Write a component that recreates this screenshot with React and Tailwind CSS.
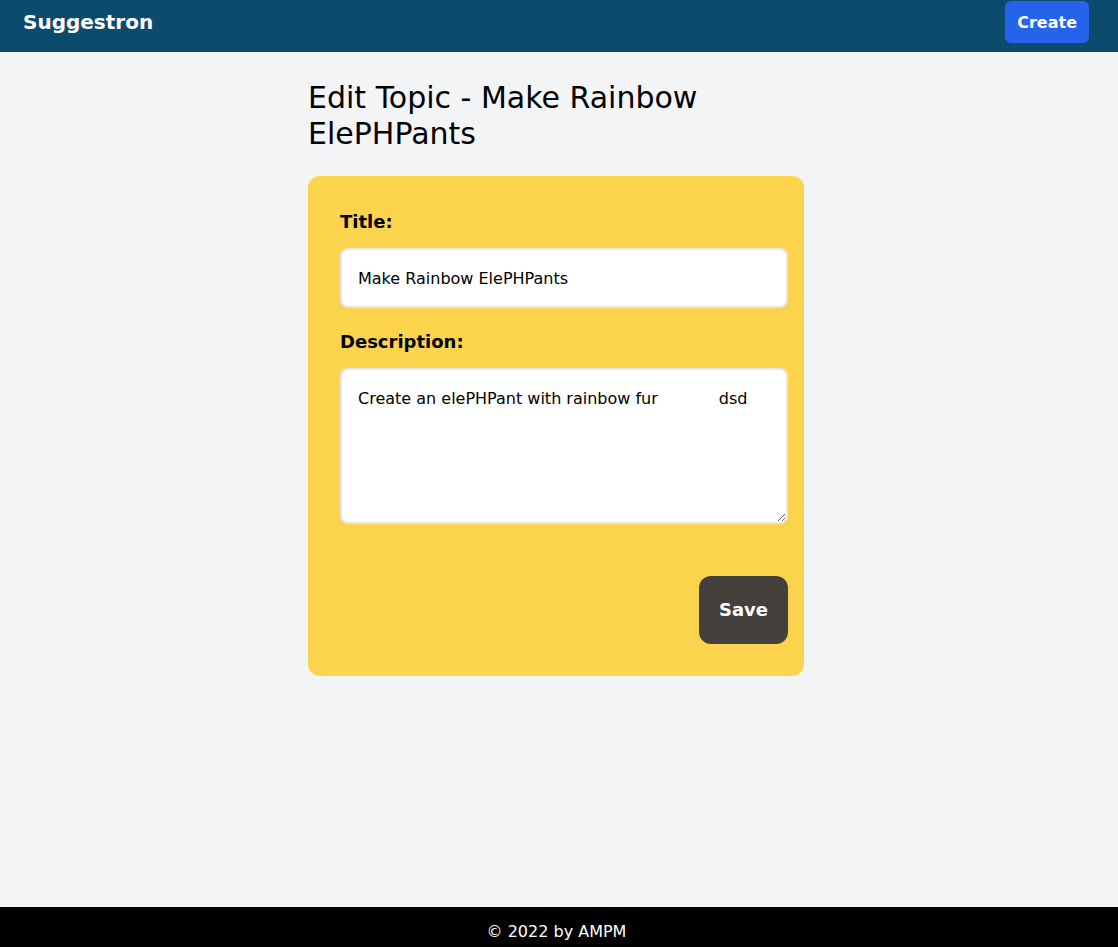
export default function App() {
  const font = { fontFamily: '"DejaVu Sans", Verdana, sans-serif' };
  return (
    <div className="min-h-screen flex flex-col bg-[#f3f4f6] text-black" style={font}>
      <header className="h-[52px] bg-[#0c4a6e] pl-[23px] pr-[29px]">
        <div className="h-[44px] flex items-center justify-between">
          <span className="text-xl font-bold text-white">Suggestron</span>
          <button className="h-[42px] pt-[2px] px-3 rounded-md bg-[#2563eb] text-white font-bold text-base">
            Create
          </button>
        </div>
      </header>
      <main className="flex-1">
        <div className="ml-[308px] w-[496px]">
          <h1 className="mt-[28px] mb-[24px] text-3xl font-normal">
            Edit Topic - Make Rainbow ElePHPants
          </h1>
          <form className="bg-[#fcd34d] rounded-xl pt-[34px] pl-8 pr-4 pb-8 flex flex-col">
            <label className="block font-bold text-lg leading-6 mb-[14px]">Title:</label>
            <input
              className="w-full h-[60px] px-4 border-2 border-[#e5e7eb] rounded-lg bg-white text-base outline-none"
              defaultValue="Make Rainbow ElePHPants"
            />
            <label className="block font-bold text-lg leading-6 mt-[22px] mb-[14px]">Description:</label>
            <textarea
              className="w-full h-[156px] pt-[17px] pb-[15px] px-4 border-2 border-[#e5e7eb] rounded-lg bg-white text-base leading-6 outline-none"
              defaultValue={"Create an elePHPant with rainbow fur            dsd"}
            />
            <div className="flex justify-end mt-[52px]">
              <button
                type="button"
                className="px-5 py-5 rounded-xl bg-[#44403c] text-white font-bold text-lg leading-7"
              >
                Save
              </button>
            </div>
          </form>
        </div>
      </main>
      <footer className="h-10 bg-black text-white flex justify-center pt-[13px] pr-[5px] text-base leading-6">
        © 2022 by AMPM
      </footer>
    </div>
  );
}
